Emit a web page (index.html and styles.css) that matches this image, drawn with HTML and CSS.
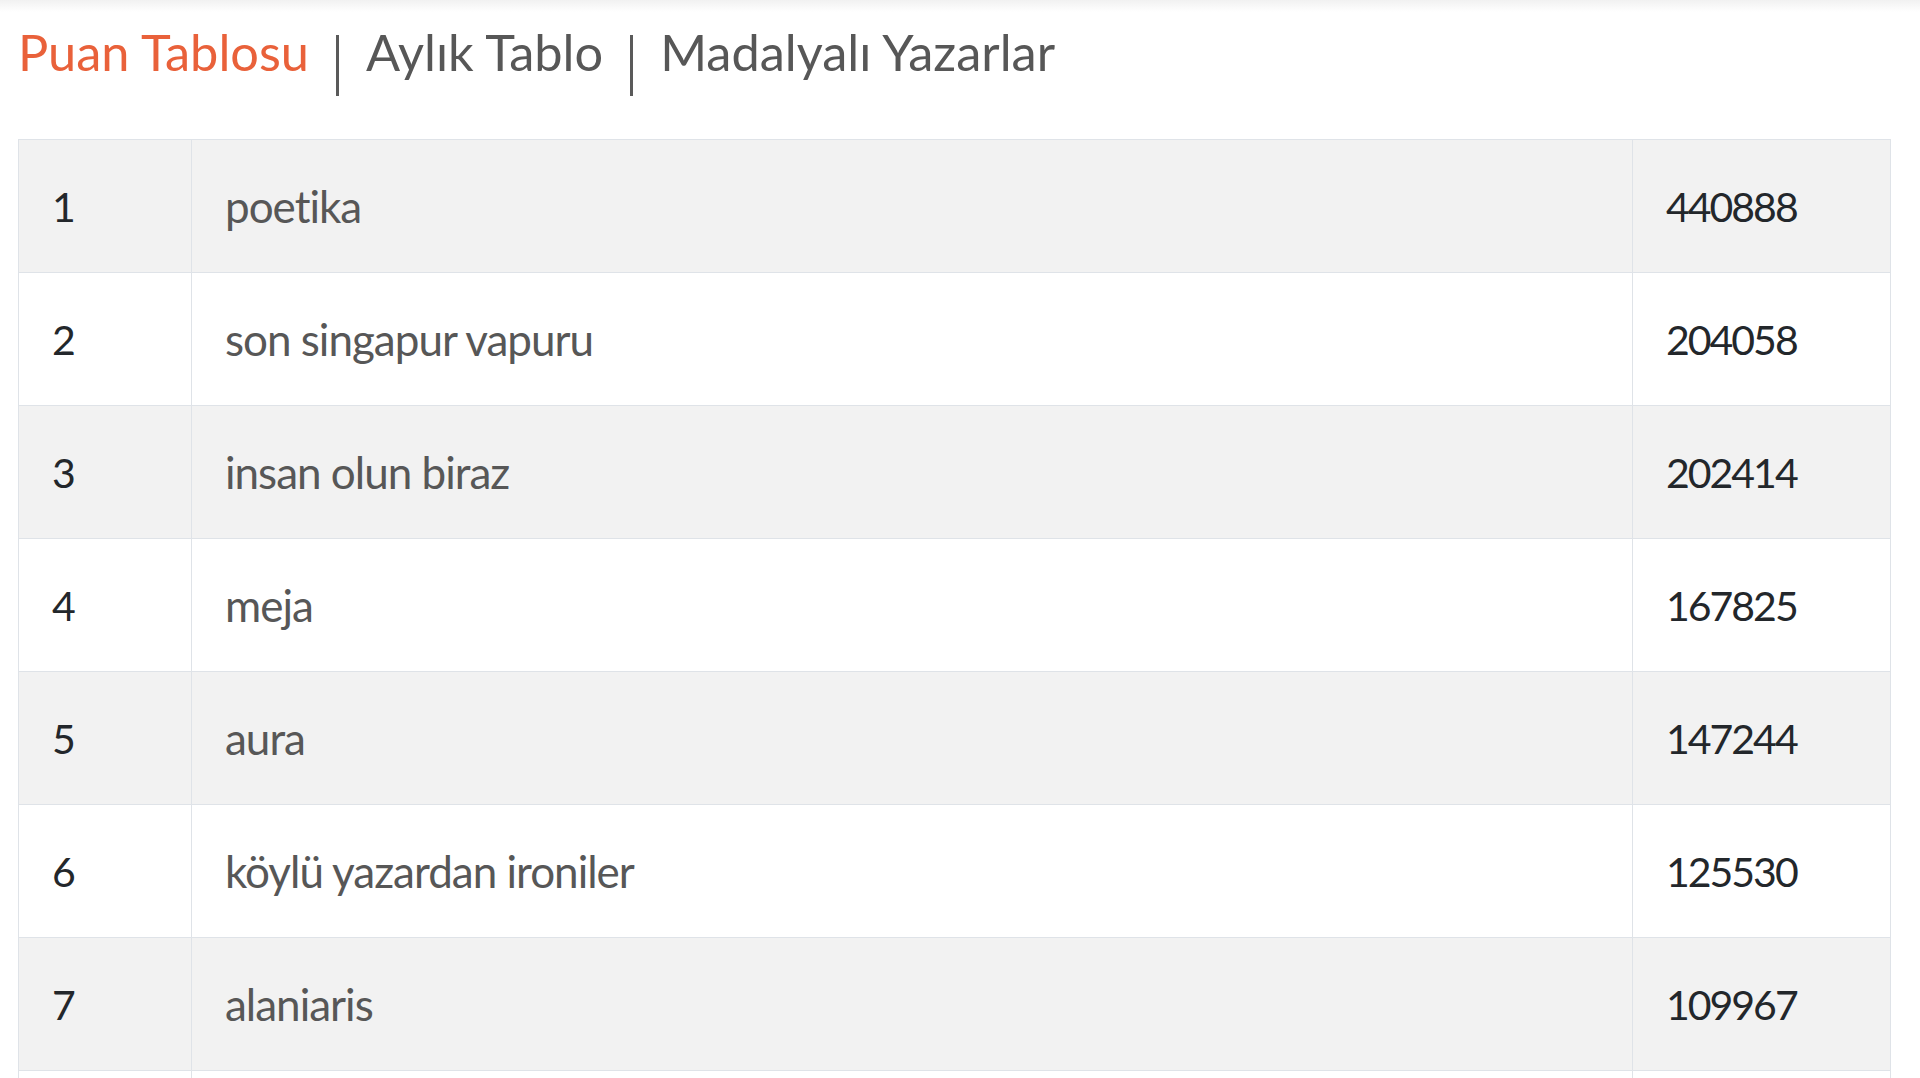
FILE: index.html
```html
<!DOCTYPE html>
<html lang="tr">
<head>
<meta charset="utf-8">
<title>Puan Tablosu</title>
<link rel="stylesheet" href="styles.css">
</head>
<body>
<div class="topshade"></div>
<main class="page">
  <nav class="tabs">
    <a class="tab active" href="#">Puan Tablosu</a>
    <span class="sep"></span>
    <a class="tab" href="#">Aylık Tablo</a>
    <span class="sep"></span>
    <a class="tab" href="#">Madalyalı Yazarlar</a>
  </nav>
  <table class="board">
    <colgroup>
      <col class="c-rank">
      <col class="c-name">
      <col class="c-score">
    </colgroup>
    <tbody>
      <tr><td class="rank">1</td><td class="name">poetika</td><td class="score">440888</td></tr>
      <tr><td class="rank">2</td><td class="name">son singapur vapuru</td><td class="score">204058</td></tr>
      <tr><td class="rank">3</td><td class="name">insan olun biraz</td><td class="score">202414</td></tr>
      <tr><td class="rank">4</td><td class="name">meja</td><td class="score">167825</td></tr>
      <tr><td class="rank">5</td><td class="name">aura</td><td class="score">147244</td></tr>
      <tr><td class="rank">6</td><td class="name">köylü yazardan ironiler</td><td class="score">125530</td></tr>
      <tr><td class="rank">7</td><td class="name">alaniaris</td><td class="score">109967</td></tr>
      <tr><td class="rank"></td><td class="name"></td><td class="score"></td></tr>
    </tbody>
  </table>
</main>
</body>
</html>
```

FILE: styles.css
```css
html, body {
  margin: 0;
  padding: 0;
  background: #ffffff;
}
body {
  font-family: Lato, "Open Sans", "Liberation Sans", sans-serif;
  overflow: hidden;
  height: 1078px;
}
.topshade {
  height: 12px;
  background: linear-gradient(#f1f1f1, #ffffff);
  margin-bottom: -12px;
}
.page {
  padding: 0 29px 0 18px;
}
.tabs {
  display: flex;
  align-items: flex-start;
  padding-top: 22px;
  height: 61px;
  margin-bottom: 56px;
}
.tab {
  font-size: 50.5px;
  line-height: 60px;
  color: #575757;
  text-decoration: none;
}
.tab.active {
  color: #e9613a;
}
.sep {
  width: 3px;
  height: 61px;
  background: #5a5a5a;
  margin: 13px 27px 0 27px;
  flex: none;
}
.board {
  width: 1873px;
  table-layout: fixed;
  border-collapse: collapse;
  border: 1px solid #dfe3e8;
}
.c-rank { width: 173px; }
.c-score { width: 258px; }
.board td {
  border: 1px solid #dfe3e8;
  height: 132px;
  padding: 0 0 0 33px;
  vertical-align: middle;
  font-size: 44px;
  line-height: 1;
  white-space: nowrap;
}
.board tr:nth-child(odd) td {
  background: #f2f2f2;
}
.board td.rank, .board td.score {
  color: #23272b;
  font-size: 41px;
  letter-spacing: -2px;
}
.board td.name {
  color: #575757;
  letter-spacing: -1px;
}
```
